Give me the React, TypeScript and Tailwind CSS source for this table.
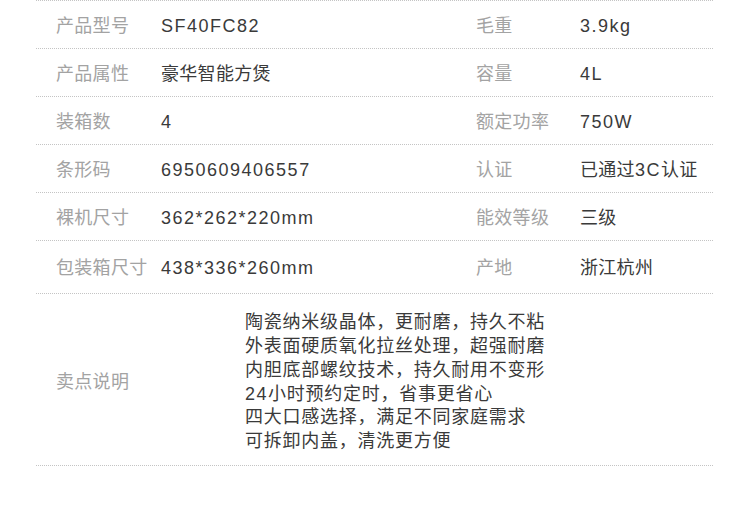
const specs: [string, string, string, string][] = [
  ['产品型号', 'SF40FC82', '毛重', '3.9kg'],
  ['产品属性', '豪华智能方煲', '容量', '4L'],
  ['装箱数', '4', '额定功率', '750W'],
  ['条形码', '6950609406557', '认证', '已通过3C认证'],
  ['裸机尺寸', '362*262*220mm', '能效等级', '三级'],
  ['包装箱尺寸', '438*336*260mm', '产地', '浙江杭州'],
];

const selling = [
  '陶瓷纳米级晶体，更耐磨，持久不粘',
  '外表面硬质氧化拉丝处理，超强耐磨',
  '内胆底部螺纹技术，持久耐用不变形',
  '24小时预约定时，省事更省心',
  '四大口感选择，满足不同家庭需求',
  '可拆卸内盖，清洗更方便',
];

// latin runs get wider tracking than the CJK ones
function Mixed({ text }: { text: string }) {
  const parts = text.split(/([A-Za-z0-9.*]+)/);
  return (
    <>
      {parts.map((p, i) =>
        /[A-Za-z0-9]/.test(p) ? (
          <span key={i} className="tracking-[1.5px]">{p}</span>
        ) : (
          <span key={i}>{p}</span>
        )
      )}
    </>
  );
}

export default function App() {
  return (
    <div
      className="w-[750px] h-[514px] bg-white overflow-hidden"
      style={{ fontFamily: '"Liberation Sans", "Noto Sans CJK SC", sans-serif' }}
    >
      <div className="ml-[36px] w-[677px] border-t border-dotted border-[#c4c4c4] text-[18px]">
        {specs.map(([l1, v1, l2, v2], i) => (
          <div
            key={l1}
            className={`grid grid-cols-[105px_315px_104px_1fr] items-center pl-[20px] pt-[3px] border-b border-dotted border-[#c4c4c4] ${i === 5 ? 'h-[53px]' : 'h-[48px]'}`}
          >
            <div className="text-[#a3a3a3] tracking-[0.3px] whitespace-nowrap">{l1}</div>
            <div className="text-[#3a3a3a] tracking-[0.3px] whitespace-nowrap"><Mixed text={v1} /></div>
            <div className="text-[#a3a3a3] tracking-[0.3px] whitespace-nowrap">{l2}</div>
            <div className="text-[#3a3a3a] tracking-[0.3px] whitespace-nowrap"><Mixed text={v2} /></div>
          </div>
        ))}
        <div className="flex items-center h-[172px] pl-[20px] border-b border-dotted border-[#c4c4c4]">
          <div className="w-[189px] pt-[6px] text-[#a3a3a3] tracking-[0.3px]">卖点说明</div>
          <div className="pt-[6px] text-[#3a3a3a] leading-[23.7px] tracking-[0.75px]">
            {selling.map(s => (
              <div key={s}><Mixed text={s} /></div>
            ))}
          </div>
        </div>
      </div>
    </div>
  );
}
